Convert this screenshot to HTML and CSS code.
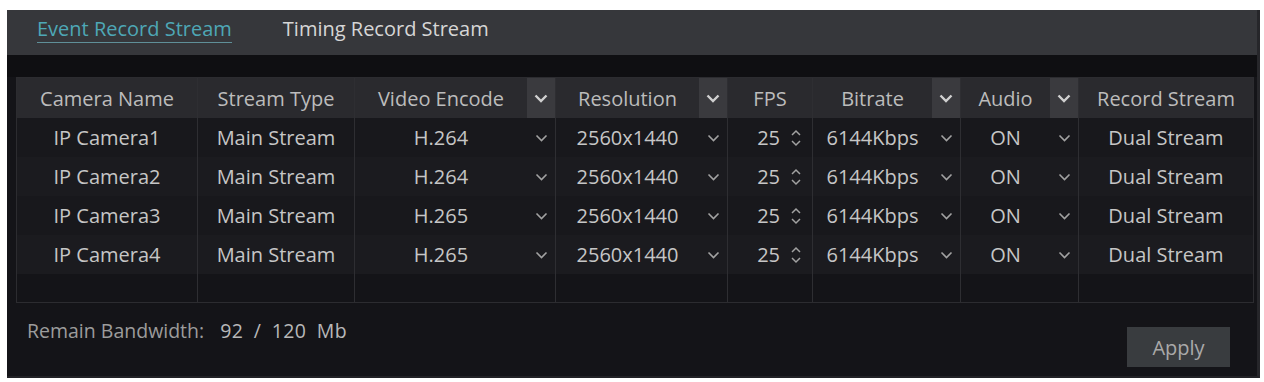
FILE: index.html
```html
<!DOCTYPE html>
<html lang="en">
<head>
<meta charset="utf-8">
<title>Record Stream</title>
<link rel="stylesheet" href="styles.css">
</head>
<body>
<div class="panel">
  <div class="tabs">
    <span class="tab active">Event Record Stream</span>
    <span class="tab">Timing Record Stream</span>
  </div>
  <div class="strip"></div>
  <div class="content">
    <div class="table">
      <div class="row head">
        <div class="cell">Camera Name</div>
        <div class="cell">Stream Type</div>
        <div class="cell sel"><span class="txt">Video Encode</span><span class="dd"><svg width="14" height="9" viewBox="0 0 14 9"><path d="M1.5 1.5 L7 7 L12.5 1.5" fill="none" stroke="#d0d0d0" stroke-width="2.4"/></svg></span></div>
        <div class="cell sel"><span class="txt">Resolution</span><span class="dd"><svg width="14" height="9" viewBox="0 0 14 9"><path d="M1.5 1.5 L7 7 L12.5 1.5" fill="none" stroke="#d0d0d0" stroke-width="2.4"/></svg></span></div>
        <div class="cell">FPS</div>
        <div class="cell sel"><span class="txt">Bitrate</span><span class="dd"><svg width="14" height="9" viewBox="0 0 14 9"><path d="M1.5 1.5 L7 7 L12.5 1.5" fill="none" stroke="#d0d0d0" stroke-width="2.4"/></svg></span></div>
        <div class="cell sel"><span class="txt">Audio</span><span class="dd"><svg width="14" height="9" viewBox="0 0 14 9"><path d="M1.5 1.5 L7 7 L12.5 1.5" fill="none" stroke="#d0d0d0" stroke-width="2.4"/></svg></span></div>
        <div class="cell">Record Stream</div>
      </div>

      <div class="row data">
        <div class="cell">IP Camera1</div>
        <div class="cell">Main Stream</div>
        <div class="cell sel"><span class="txt">H.264</span><span class="dd"><svg width="13" height="8" viewBox="0 0 13 8"><path d="M1.5 1.5 L6.5 6.5 L11.5 1.5" fill="none" stroke="#a2a2a2" stroke-width="1.6"/></svg></span></div>
        <div class="cell sel"><span class="txt">2560x1440</span><span class="dd"><svg width="13" height="8" viewBox="0 0 13 8"><path d="M1.5 1.5 L6.5 6.5 L11.5 1.5" fill="none" stroke="#a2a2a2" stroke-width="1.6"/></svg></span></div>
        <div class="cell fps"><span class="num">25</span><svg class="spin" width="12" height="18" viewBox="0 0 12 18"><path d="M2 6 L6 2 L10 6 M2 12 L6 16 L10 12" fill="none" stroke="#a2a2a2" stroke-width="1.5"/></svg></div>
        <div class="cell sel"><span class="txt">6144Kbps</span><span class="dd"><svg width="13" height="8" viewBox="0 0 13 8"><path d="M1.5 1.5 L6.5 6.5 L11.5 1.5" fill="none" stroke="#a2a2a2" stroke-width="1.6"/></svg></span></div>
        <div class="cell sel"><span class="txt">ON</span><span class="dd"><svg width="13" height="8" viewBox="0 0 13 8"><path d="M1.5 1.5 L6.5 6.5 L11.5 1.5" fill="none" stroke="#a2a2a2" stroke-width="1.6"/></svg></span></div>
        <div class="cell">Dual Stream</div>
      </div>

      <div class="row data alt">
        <div class="cell">IP Camera2</div>
        <div class="cell">Main Stream</div>
        <div class="cell sel"><span class="txt">H.264</span><span class="dd"><svg width="13" height="8" viewBox="0 0 13 8"><path d="M1.5 1.5 L6.5 6.5 L11.5 1.5" fill="none" stroke="#a2a2a2" stroke-width="1.6"/></svg></span></div>
        <div class="cell sel"><span class="txt">2560x1440</span><span class="dd"><svg width="13" height="8" viewBox="0 0 13 8"><path d="M1.5 1.5 L6.5 6.5 L11.5 1.5" fill="none" stroke="#a2a2a2" stroke-width="1.6"/></svg></span></div>
        <div class="cell fps"><span class="num">25</span><svg class="spin" width="12" height="18" viewBox="0 0 12 18"><path d="M2 6 L6 2 L10 6 M2 12 L6 16 L10 12" fill="none" stroke="#a2a2a2" stroke-width="1.5"/></svg></div>
        <div class="cell sel"><span class="txt">6144Kbps</span><span class="dd"><svg width="13" height="8" viewBox="0 0 13 8"><path d="M1.5 1.5 L6.5 6.5 L11.5 1.5" fill="none" stroke="#a2a2a2" stroke-width="1.6"/></svg></span></div>
        <div class="cell sel"><span class="txt">ON</span><span class="dd"><svg width="13" height="8" viewBox="0 0 13 8"><path d="M1.5 1.5 L6.5 6.5 L11.5 1.5" fill="none" stroke="#a2a2a2" stroke-width="1.6"/></svg></span></div>
        <div class="cell">Dual Stream</div>
      </div>

      <div class="row data">
        <div class="cell">IP Camera3</div>
        <div class="cell">Main Stream</div>
        <div class="cell sel"><span class="txt">H.265</span><span class="dd"><svg width="13" height="8" viewBox="0 0 13 8"><path d="M1.5 1.5 L6.5 6.5 L11.5 1.5" fill="none" stroke="#a2a2a2" stroke-width="1.6"/></svg></span></div>
        <div class="cell sel"><span class="txt">2560x1440</span><span class="dd"><svg width="13" height="8" viewBox="0 0 13 8"><path d="M1.5 1.5 L6.5 6.5 L11.5 1.5" fill="none" stroke="#a2a2a2" stroke-width="1.6"/></svg></span></div>
        <div class="cell fps"><span class="num">25</span><svg class="spin" width="12" height="18" viewBox="0 0 12 18"><path d="M2 6 L6 2 L10 6 M2 12 L6 16 L10 12" fill="none" stroke="#a2a2a2" stroke-width="1.5"/></svg></div>
        <div class="cell sel"><span class="txt">6144Kbps</span><span class="dd"><svg width="13" height="8" viewBox="0 0 13 8"><path d="M1.5 1.5 L6.5 6.5 L11.5 1.5" fill="none" stroke="#a2a2a2" stroke-width="1.6"/></svg></span></div>
        <div class="cell sel"><span class="txt">ON</span><span class="dd"><svg width="13" height="8" viewBox="0 0 13 8"><path d="M1.5 1.5 L6.5 6.5 L11.5 1.5" fill="none" stroke="#a2a2a2" stroke-width="1.6"/></svg></span></div>
        <div class="cell">Dual Stream</div>
      </div>

      <div class="row data alt">
        <div class="cell">IP Camera4</div>
        <div class="cell">Main Stream</div>
        <div class="cell sel"><span class="txt">H.265</span><span class="dd"><svg width="13" height="8" viewBox="0 0 13 8"><path d="M1.5 1.5 L6.5 6.5 L11.5 1.5" fill="none" stroke="#a2a2a2" stroke-width="1.6"/></svg></span></div>
        <div class="cell sel"><span class="txt">2560x1440</span><span class="dd"><svg width="13" height="8" viewBox="0 0 13 8"><path d="M1.5 1.5 L6.5 6.5 L11.5 1.5" fill="none" stroke="#a2a2a2" stroke-width="1.6"/></svg></span></div>
        <div class="cell fps"><span class="num">25</span><svg class="spin" width="12" height="18" viewBox="0 0 12 18"><path d="M2 6 L6 2 L10 6 M2 12 L6 16 L10 12" fill="none" stroke="#a2a2a2" stroke-width="1.5"/></svg></div>
        <div class="cell sel"><span class="txt">6144Kbps</span><span class="dd"><svg width="13" height="8" viewBox="0 0 13 8"><path d="M1.5 1.5 L6.5 6.5 L11.5 1.5" fill="none" stroke="#a2a2a2" stroke-width="1.6"/></svg></span></div>
        <div class="cell sel"><span class="txt">ON</span><span class="dd"><svg width="13" height="8" viewBox="0 0 13 8"><path d="M1.5 1.5 L6.5 6.5 L11.5 1.5" fill="none" stroke="#a2a2a2" stroke-width="1.6"/></svg></span></div>
        <div class="cell">Dual Stream</div>
      </div>

      <div class="row empty">
        <div class="cell"></div><div class="cell"></div><div class="cell"></div><div class="cell"></div>
        <div class="cell"></div><div class="cell"></div><div class="cell"></div><div class="cell"></div>
      </div>
    </div>

    <div class="footer">
      <div class="bandwidth"><span class="label">Remain Bandwidth:</span><span class="value">92 / 120 Mb</span></div>
      <button class="apply" type="button">Apply</button>
    </div>
  </div>
</div>
</body>
</html>
```

FILE: styles.css
```css
* { box-sizing: border-box; }

html, body {
  margin: 0;
  padding: 0;
  background: #ffffff;
}

body {
  font-family: "Open Sans", "Noto Sans", sans-serif;
  font-size: 20px;
  color: #c8c8c8;
}

.panel {
  margin: 10px 0 0 7px;
  width: 1253px;
  height: 368px;
  background: #141418;
  display: flex;
  flex-direction: column;
  border-right: 3px solid #26262a;
  border-bottom: 2px solid #222226;
}

.tabs {
  flex: none;
  height: 45px;
  background: #36373b;
  display: flex;
  align-items: flex-start;
  padding: 5px 0 0 30px;
  gap: 51px;
}

.tab {
  line-height: 27px;
  color: #d6d6d6;
  white-space: nowrap;
}

.tab.active {
  color: #4ea7b6;
  border-bottom: 1px solid #5f8f98;
}

.strip {
  flex: none;
  height: 22px;
  background: #0f0f12;
}

.content {
  flex: 1;
  min-height: 0;
  padding: 0 3px 0 9px;
  display: flex;
  flex-direction: column;
}

.table {
  flex: none;
  width: 1238px;
  border: 1px solid #2c2c30;
}

.row {
  display: grid;
  grid-template-columns: 180px 157px 201px 172px 85px 148px 118px 175px;
}

.cell {
  display: flex;
  align-items: center;
  justify-content: center;
  white-space: nowrap;
  border-left: 1px solid #2e2e32;
}

.cell:first-child { border-left: none; }

.head {
  height: 40px;
  background: #2a2a2e;
  color: #bcbcbc;
}

.data {
  height: 39px;
  background: #18181c;
  color: #c6c6c6;
}

.data.alt { background: #1b1b1f; }

.empty {
  height: 28px;
  background: #141418;
}

.sel {
  justify-content: stretch;
  align-items: stretch;
}

.sel .txt {
  flex: 1;
  display: flex;
  align-items: center;
  justify-content: center;
}

.sel .dd {
  width: 28px;
  flex: none;
  display: flex;
  align-items: center;
  justify-content: center;
}

.head .sel .dd { background: #3a3a3e; }

.fps {
  justify-content: flex-end;
  padding-right: 10px;
  gap: 10px;
}

.footer {
  flex: 1;
  display: flex;
  justify-content: space-between;
  align-items: flex-start;
  padding: 14px 24px 0 11px;
}

.bandwidth {
  font-size: 19.5px;
  line-height: 28px;
  display: flex;
  gap: 16px;
}

.label { color: #9c9c9c; }
.value { color: #b8b8b8; word-spacing: 5px; letter-spacing: 0.4px; }

.apply {
  margin-top: 10px;
  width: 103px;
  height: 40px;
  border: none;
  background: #393c3f;
  color: #a9a9a9;
  font-family: "Open Sans", "Noto Sans", sans-serif;
  font-size: 20px;
  padding: 0;
}
```
